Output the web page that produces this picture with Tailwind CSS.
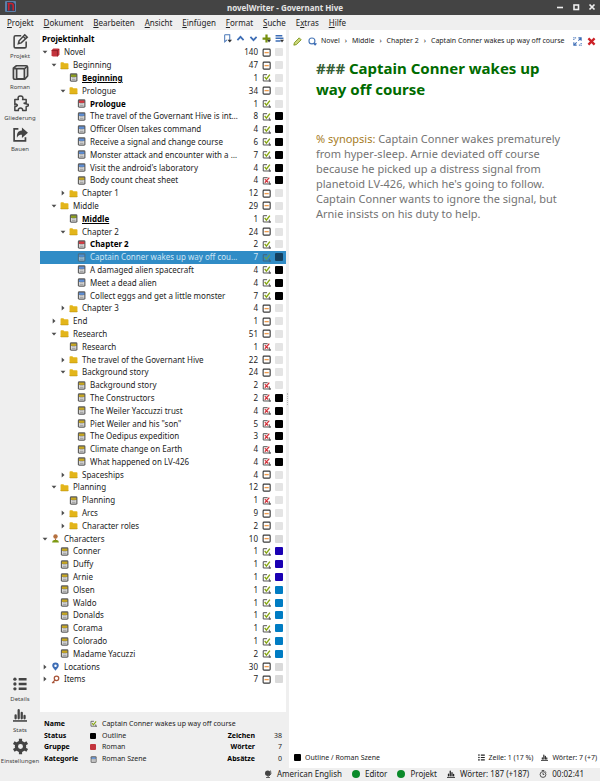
<!DOCTYPE html>
<html lang="de">
<head>
<meta charset="utf-8">
<title>novelWriter - Governant Hive</title>
<script src="https://cdn.jsdelivr.net/npm/@tailwindcss/browser@4"></script>
</head>
<body class="flex h-screen flex-col overflow-hidden bg-[#efefef] font-['Noto_Sans',sans-serif] text-[8px] leading-[12px] text-[#232323]">

<svg class="hidden" aria-hidden="true">
  <symbol id="doc" viewBox="0 0 16 16"><rect x="1.500" y="0.500" width="13.500" height="15" rx="2.500" fill="#5d5d5d"/><rect x="3.500" y="7" width="9.500" height="6.500" fill="#dedede"/><path d="M5 8.500h6.500M5 11.500h6.500" stroke="#8a8a8a" stroke-width="1.200"/><rect x="3.500" y="2.800" width="9.500" height="4" fill="currentColor"/></symbol>
  <symbol id="folder" viewBox="0 0 16 16"><path d="M1 3.500Q1 2 2.500 2H6l1.500 2H13.500Q15 4 15 5.500V12.500Q15 14 13.500 14H2.500Q1 14 1 12.500Z" fill="#e3b51a"/><path d="M1 12.500Q1 14 2.500 14h11q1.500 0 1.500-1.500" fill="none" stroke="#b8900c"/></symbol>
  <symbol id="cube" viewBox="0 0 16 16"><path d="M4 1h9.500L15 2.500V12l-3 3H3L1 13V4Z" fill="#c3343d"/><path d="M1.500 4.500H11.500V15M11.500 4.500 14.500 2" fill="none" stroke="#7e1b24" stroke-width="1.200"/></symbol>
  <symbol id="person" viewBox="0 0 16 16"><circle cx="8" cy="4.500" r="3.900" fill="#b5703f"/><path d="M2 15q0-4.500 3.500-4.500h5q3.500 0 3.500 4.500Z" fill="#7d9a13"/><path d="M7 8h2v3H7z" fill="#b5703f"/></symbol>
  <symbol id="pin" viewBox="0 0 16 16"><path d="M8 1a5.800 5.800 0 0 0-5.800 5.800C2.200 10 6 12.500 8 15.500c2-3 5.800-5.500 5.800-8.700A5.800 5.800 0 0 0 8 1Z" fill="#3d6db5"/><circle cx="8" cy="6.500" r="2.200" fill="#fff"/></symbol>
  <symbol id="key" viewBox="0 0 16 16"><path d="M7 9 2 14.500M4 12.500l2 2" stroke="#a8553a" stroke-width="2.200" fill="none"/><circle cx="9.800" cy="5.800" r="4" fill="none" stroke="#a8553a" stroke-width="2.200"/></symbol>
  <symbol id="yes" viewBox="0 0 16 16"><path d="M13 10v4.200H2.200V3H9" fill="none" stroke="#4a4a4a" stroke-width="1.700"/><path d="m4.800 7 3 4L14 3" fill="none" stroke="#86a512" stroke-width="2.500"/><path d="M15.500 12v3.500H12z" fill="#444"/></symbol>
  <symbol id="no" viewBox="0 0 16 16"><path d="M13 9.500v4.700H2.200V3H10" fill="none" stroke="#4a4a4a" stroke-width="1.700"/><path d="m5 5.500 6 6M13 3 5 12" fill="none" stroke="#d3323a" stroke-width="2.200"/><path d="M15.500 12v3.500H12z" fill="#444"/></symbol>
  <symbol id="part" viewBox="0 0 16 16"><rect x="2" y="2" width="12.500" height="12.500" rx="1.500" fill="#fff" stroke="#3a3a3a" stroke-width="2"/><path d="M4.500 8.200h7.500" stroke="#ee9a4c" stroke-width="2.400"/></symbol>
  <symbol id="down" viewBox="0 0 16 16"><path d="M1.500 4.500h13L8 12Z" fill="#4d4d4d"/></symbol>
  <symbol id="right" viewBox="0 0 16 16"><path d="M4.500 1.500v13L12 8Z" fill="#4d4d4d"/></symbol>
  <symbol id="bars" viewBox="0 0 16 16"><path d="M0 14.800h16" stroke="currentColor" stroke-width="1.800"/><path d="M3 11.700V8.500M6.500 11.700V2.500M10 11.700V5.500M13.200 11.700V9" stroke="currentColor" stroke-width="2.600" stroke-linecap="round"/></symbol>
  <symbol id="list" viewBox="0 0 16 16"><path d="M6.500 2.500h9M6.500 8h9M6.500 13.500h9" stroke="currentColor" stroke-width="2.800"/><g fill="currentColor"><circle cx="2.200" cy="2.500" r="1.900"/><circle cx="2.200" cy="8" r="1.900"/><circle cx="2.200" cy="13.500" r="1.900"/></g></symbol>
</svg>

<header class="relative flex h-[15px] shrink-0 items-center justify-center bg-[#444] pr-[30px] text-white">
  <svg class="absolute left-[5px] top-[1px] size-[11px]" viewBox="0 0 22 22"><rect width="22" height="22" rx="2" fill="#5b7fa8"/><path d="M4 2h12l4 4v14H4Z" fill="#2f4259"/><path d="M5 5h7q4.500 0 4.500 4.500V19M7.500 5v14" fill="none" stroke="#c9202c" stroke-width="3.200"/></svg>
  <h1 class="font-bold text-[#e6e6e6]">novelWriter - Governant Hive</h1>
  <div class="absolute right-[3px] top-[2px] flex gap-[6px]">
    <button aria-label="Minimieren" class="size-[10px]"><svg viewBox="0 0 10 10"><path d="M2 5.500h6" stroke="#eee" stroke-width="1.600"/></svg></button>
    <button aria-label="Maximieren" class="size-[10px]"><svg viewBox="0 0 10 10"><rect x="3" y="3" width="4.500" height="4.500" fill="none" stroke="#eee" stroke-width="1.600"/></svg></button>
    <button aria-label="Schließen" class="size-[10px]"><svg viewBox="0 0 10 10"><path d="m2.500 2.500 5 5m0-5-5 5" stroke="#eee" stroke-width="1.700"/></svg></button>
  </div>
</header>

<nav class="flex h-[15px] shrink-0 items-center gap-[10px] px-[7px]">
  <button><u>P</u>rojekt</button><button><u>D</u>okument</button><button><u>B</u>earbeiten</button><button><u>A</u>nsicht</button><button><u>E</u>infügen</button><button><u>F</u>ormat</button><button><u>S</u>uche</button><button>E<u>x</u>tras</button><button><u>H</u>ilfe</button>
</nav>

<div class="flex min-h-0 flex-1">
  <aside class="flex w-10 shrink-0 flex-col gap-[3px] pb-[2px] pt-[3px] text-[6px] leading-[10px] text-[#444]">
    <button class="flex h-7 flex-col items-center gap-[1px]"><svg class="size-[17px] shrink-0" viewBox="0 0 24 24" fill="none" stroke="currentColor" stroke-width="2.200"><path d="M13 4H5q-2 0-2 2v13q0 2 2 2h13q2 0 2-2v-7"/><path d="m9 15 1-4 8-8.500 3.500 3.500-8.500 8ZM16 5l3 3"/></svg>Projekt</button>
    <button class="flex h-7 flex-col items-center gap-[1px]"><svg class="size-[17px] shrink-0" viewBox="0 0 24 24" fill="none" stroke="currentColor" stroke-width="2.400"><path d="M6 2.500h14q2 0 2 2V17l-4 4.500H4q-2 0-2-2V6Z"/><rect x="6.500" y="6.500" width="11" height="14.500" rx="1.500"/><path d="m17.500 7 3.500-3.500M3 6.500h4"/></svg>Roman</button>
    <button class="flex h-7 flex-col items-center gap-[1px]"><svg class="size-[17px] shrink-0" viewBox="0 0 24 24" fill="none" stroke="currentColor" stroke-width="2.100" stroke-linejoin="round"><path d="M4 6.500h5q-1.500-5 3-5t3 5h5v5q-3-.5-3 0t5 1.500-2 3.500v5.500h-5q.5-3.500-3-3.500t-3 3.500H4v-5.500q5-1.500 3-3t-3 .5Z"/></svg>Gliederung</button>
    <button class="flex h-7 flex-col items-center gap-[1px]"><svg class="size-[17px] shrink-0" viewBox="0 0 24 24" fill="none" stroke="currentColor" stroke-width="2.400"><path d="M9 4H3v17h16v-5"/><path d="M14 2v4.500C8 7 6.500 11 7 16.500c2-3.500 4-4 7-4V17l8.500-7.500Z" fill="currentColor" stroke="none"/></svg>Bauen</button>
    <div class="flex-1"></div>
    <button class="flex h-7 flex-col items-center gap-[2px]"><svg class="my-[1px] size-[14px] shrink-0"><use href="#list"/></svg>Details</button>
    <button class="flex h-7 flex-col items-center gap-[2px]"><svg class="my-[1px] size-[14px] shrink-0"><use href="#bars"/></svg>Stats</button>
    <button class="flex h-7 flex-col items-center gap-[1px]"><svg class="size-[17px] shrink-0" viewBox="0 0 24 24" fill="none" stroke="currentColor"><circle cx="12" cy="12" r="5.800" stroke-width="4.600"/><path d="M12 1v5M12 18v5M2.500 6.500l4.300 2.500M17.200 15l4.300 2.500M2.500 17.500 6.800 15M17.200 9l4.300-2.500" stroke-width="4.500"/></svg>Einstellungen</button>
  </aside>

  <main class="flex min-w-0 flex-1">
    <section class="flex w-[41%] min-w-[246px] max-w-[246px] flex-col">
      <div class="flex h-4 shrink-0 items-center bg-white pl-[2px] pr-[2px] pt-px">
        <h2 class="flex-1 font-bold text-black">Projektinhalt</h2>
        <div class="flex gap-[4px]">
          <button aria-label="Lesezeichen"><svg class="size-[9px]" viewBox="0 0 16 16"><path d="M3 1.500h9v10M3 1.500V14l4-3.500" fill="none" stroke="#4a78b8" stroke-width="1.800"/><path d="M8 10h8l-4 5z" fill="#333"/></svg></button>
          <button aria-label="Nach oben"><svg class="size-[9px]" viewBox="0 0 16 16"><path d="m2.500 11 5.500-6 5.500 6" fill="none" stroke="#3d6db5" stroke-width="3"/></svg></button>
          <button aria-label="Nach unten"><svg class="size-[9px]" viewBox="0 0 16 16"><path d="m2.500 5 5.500 6 5.500-6" fill="none" stroke="#3d6db5" stroke-width="3"/></svg></button>
          <button aria-label="Hinzufügen"><svg class="size-[9px]" viewBox="0 0 16 16"><path d="M8 1v14M1 8h14" stroke="#76900d" stroke-width="4"/><path d="M9 10h7l-3.500 5z" fill="#333"/></svg></button>
          <button aria-label="Menü"><svg class="size-[9px]" viewBox="0 0 16 16"><path d="M1 3h12M1 7.500h14M1 12.500h9" stroke="#3d6db5" stroke-width="2.600"/><path d="M9 10h7l-3.500 5z" fill="#333"/></svg></button>
        </div>
      </div>
      <ul id="tree" role="tree" aria-label="Projektinhalt" class="flex min-h-0 flex-1 flex-col bg-white pb-[26px]"></ul>
      <div class="grid h-14 shrink-0 auto-rows-fr grid-cols-[46px_12px_1fr_auto_27px] items-center pb-[3px] pl-[4px] pr-[4px] pt-[6px] text-[7px]">
        <b class="text-black">Name</b><svg class="size-[7px]"><use href="#yes"/></svg><span class="col-span-3">Captain Conner wakes up way off course</span>
        <b class="text-black">Status</b><i class="size-[6px] rounded-[1px] bg-black"></i><span>Outline</span><b class="text-right text-black">Zeichen</b><span class="text-right">38</span>
        <b class="text-black">Gruppe</b><i class="size-[6px] rounded-[1px] bg-[#c3343d]"></i><span>Roman</span><b class="text-right text-black">Wörter</b><span class="text-right">7</span>
        <b class="text-black">Kategorie</b><svg class="size-[7px] text-[#6f9bd8]"><use href="#doc"/></svg><span>Roman Szene</span><b class="text-right text-black">Absätze</b><span class="text-right">0</span>
      </div>
    </section>

    <div role="separator" class="flex w-[3px] shrink-0 items-center justify-center"><i class="h-[12px] border-l border-dotted border-[#bbb]"></i></div>

    <section class="flex min-w-0 flex-1 flex-col bg-white">
      <div class="flex h-[22px] shrink-0 items-center px-[4px] text-[7px]">
        <button aria-label="Bearbeiten" class="mr-[6px]"><svg class="size-[9px]" viewBox="0 0 16 16"><path d="m1.500 14.500 1-4.500 8.500-8.500 3.500 3.500L6 13.500Z" fill="#cbd67c" stroke="#76900d" stroke-width="1.500"/></svg></button>
        <button aria-label="Suchen" class="mr-[4px]"><svg class="size-[9px]" viewBox="0 0 16 16"><circle cx="7" cy="7" r="5.300" fill="none" stroke="#4a78b8" stroke-width="2"/><path d="m11 11 3 3" stroke="#3d6db5" stroke-width="2.500"/><path d="M9 11h7l-3.500 4.500z" fill="#3d6db5"/></svg></button>
        <span class="flex min-w-0 flex-1 gap-[5px] whitespace-nowrap"><span>Novel</span><span>›</span><span>Middle</span><span>›</span><span>Chapter 2</span><span>›</span><span>Captain Conner wakes up way off course</span></span>
        <button aria-label="Vollbild" class="mr-[5px]"><svg class="size-[9px]" viewBox="0 0 16 16" fill="none" stroke="#3d6db5" stroke-width="1.900"><path d="M9.500 1.500h5v5M14 2 9.500 6.500M6.500 14.500h-5v-5M2 14l4.500-4.500"/><path d="M1.500 5.500v-4h4M14.500 10.500v4h-4" stroke-dasharray="2 1.200"/></svg></button>
        <button aria-label="Schließen"><svg class="size-[9px]" viewBox="0 0 16 16"><path d="m2.500 2.500 11 11m0-11-11 11" stroke="#cc2127" stroke-width="4"/></svg></button>
      </div>
      <article class="flex-1 px-[27px] pt-[6px]">
        <h3 class="max-w-[250px] text-[15px] font-bold leading-[21px] text-[#006b00]"><span class="text-[#366036]">###</span> Captain Conner wakes up<br>way off course</h3>
        <p class="mt-[31px] max-w-[250px] text-[11px] leading-[15px] text-[#737373]"><span class="text-[#a67c1e]">% synopsis:</span> Captain Conner wakes prematurely from hyper-sleep. Arnie deviated off course because he picked up a distress signal from planetoid LV-426, which he's going to follow. Captain Conner wants to ignore the signal, but Arnie insists on his duty to help.</p>
      </article>
      <div class="flex h-[21px] shrink-0 items-center gap-[4px] pl-[5px] pr-[3px] text-[7px]">
        <i class="size-[7px] rounded-[1px] bg-black"></i><span class="flex-1">Outline / Roman Szene</span>
        <svg class="size-[7px]"><use href="#list"/></svg><span class="mr-[4px]">Zeile: 1 (17 %)</span>
        <svg class="size-[7px]"><use href="#bars"/></svg><span>Wörter: 7 (+7)</span>
      </div>
    </section>
  </main>
</div>

<footer class="flex h-[13px] shrink-0 items-center justify-end gap-[10px] pb-[1px] pr-[16px]">
  <span class="flex items-center gap-[5px]"><svg class="size-[8px]" viewBox="0 0 16 16"><circle cx="7.500" cy="6.500" r="5.500" fill="#444"/><path d="M13 1q4 8-4 12M8 12v3M4 15h8" fill="none" stroke="#444" stroke-width="1.600"/></svg>American English</span>
  <span class="flex items-center gap-[5px]"><i class="size-[8px] rounded-full bg-[#0a8a2a]"></i>Editor</span>
  <span class="flex items-center gap-[5px]"><i class="size-[8px] rounded-full bg-[#0a8a2a]"></i>Projekt</span>
  <span class="flex items-center gap-[5px]"><svg class="size-[8px]"><use href="#bars"/></svg>Wörter: 187 (+187)</span>
  <span class="flex items-center gap-[5px]"><svg class="size-[8px]" viewBox="0 0 16 16" fill="none" stroke="#444" stroke-width="1.800"><circle cx="8" cy="9" r="5.800"/><path d="M8 5.500V9h2.500M5.500 1h5M13 3l1.500 1.500"/></svg>00:02:41</span>
</footer>

<script>
const INDENT = ['pl-0', 'pl-[9px]', 'pl-[18px]', 'pl-[26px]'];
const NOTE = 'text-[#c9a820]', SCENE = 'text-[#5e8fd6]', CHAP = 'text-[#d93a42]', PART = 'text-[#8da01c]';
const GREY = 'bg-[#e4e4e4]', BLACK = 'bg-black', NAVY = 'bg-[#1a00b3]', BLUE = 'bg-[#007cc3]';
// level, arrow, icon, icon colour, label, count, state, status colour, label style
const rows = [
  [0,'down','cube','','Novel',140,'part',GREY],
  [1,'down','folder','','Beginning',47,'part',GREY],
  [2,'','doc',PART,'Beginning',1,'yes',GREY,'font-bold text-black underline'],
  [2,'down','folder','','Prologue',34,'part',GREY],
  [3,'','doc',CHAP,'Prologue',1,'yes',GREY,'font-bold text-black'],
  [3,'','doc',SCENE,'The travel of the Governant Hive is int…',8,'yes',BLACK],
  [3,'','doc',SCENE,'Officer Olsen takes command',4,'yes',BLACK],
  [3,'','doc',SCENE,'Receive a signal and change course',6,'yes',BLACK],
  [3,'','doc',SCENE,'Monster attack and encounter with a …',7,'yes',BLACK],
  [3,'','doc',SCENE,"Visit the android's laboratory",4,'yes',BLACK],
  [3,'','doc',NOTE,'Body count cheat sheet',4,'no',BLACK],
  [2,'right','folder','','Chapter 1',12,'part',GREY],
  [1,'down','folder','','Middle',29,'part',GREY],
  [2,'','doc',PART,'Middle',1,'yes',GREY,'font-bold text-black underline'],
  [2,'down','folder','','Chapter 2',24,'part',GREY],
  [3,'','doc',CHAP,'Chapter 2',2,'yes',GREY,'font-bold text-black'],
  [3,'','doc',SCENE,'Captain Conner wakes up way off cou…',7,'yes','bg-[#14405f]','',true],
  [3,'','doc',SCENE,'A damaged alien spacecraft',4,'yes',BLACK],
  [3,'','doc',SCENE,'Meet a dead alien',4,'yes',BLACK],
  [3,'','doc',SCENE,'Collect eggs and get a little monster',7,'yes',BLACK],
  [2,'right','folder','','Chapter 3',4,'part',GREY],
  [1,'right','folder','','End',1,'part',GREY],
  [1,'down','folder','','Research',51,'part',GREY],
  [2,'','doc',NOTE,'Research',1,'no',GREY],
  [2,'right','folder','','The travel of the Governant Hive',22,'part',GREY],
  [2,'down','folder','','Background story',24,'part',GREY],
  [3,'','doc',NOTE,'Background story',2,'no',GREY],
  [3,'','doc',NOTE,'The Constructors',2,'no',BLACK],
  [3,'','doc',NOTE,'The Weiler Yaccuzzi trust',4,'no',BLACK],
  [3,'','doc',NOTE,'Piet Weiler and his "son"',5,'no',BLACK],
  [3,'','doc',NOTE,'The Oedipus expedition',3,'no',BLACK],
  [3,'','doc',NOTE,'Climate change on Earth',4,'no',BLACK],
  [3,'','doc',NOTE,'What happened on LV-426',4,'no',BLACK],
  [2,'right','folder','','Spaceships',4,'part',GREY],
  [1,'down','folder','','Planning',12,'part',GREY],
  [2,'','doc',NOTE,'Planning',1,'no',GREY],
  [2,'right','folder','','Arcs',9,'part',GREY],
  [2,'right','folder','','Character roles',2,'part',GREY],
  [0,'down','person','','Characters',10,'part','bg-[#dadada]'],
  [1,'','doc',NOTE,'Conner',1,'yes',NAVY],
  [1,'','doc',NOTE,'Duffy',1,'yes',NAVY],
  [1,'','doc',NOTE,'Arnie',1,'yes',NAVY],
  [1,'','doc',NOTE,'Olsen',1,'yes',BLUE],
  [1,'','doc',NOTE,'Waldo',1,'yes',BLUE],
  [1,'','doc',NOTE,'Donalds',1,'yes',BLUE],
  [1,'','doc',NOTE,'Corama',1,'yes',BLUE],
  [1,'','doc',NOTE,'Colorado',1,'yes',BLUE],
  [1,'','doc',NOTE,'Madame Yacuzzi',2,'yes',BLUE],
  [0,'right','pin','','Locations',30,'part','bg-[#dadada]'],
  [0,'right','key','','Items',7,'part','bg-[#dadada]'],
];
document.getElementById('tree').innerHTML = rows.map(([lv, arrow, icon, tint, label, n, state, status, style = '', sel]) => `
  <li role="treeitem" aria-level="${lv + 1}" ${sel ? 'aria-selected="true"' : ''} class="flex min-h-0 flex-1 items-center pr-[3px] ${INDENT[lv]} ${sel ? 'bg-[#308cc6] text-[#cfe6f5]' : ''}">
    <span class="flex w-[11px] shrink-0 justify-center pr-px"><svg class="size-[6px]">${arrow ? `<use href="#${arrow}"/>` : ''}</svg></span>
    <svg class="mr-[4px] size-[9px] shrink-0 ${tint} ${sel ? 'opacity-60' : ''}"><use href="#${icon}"/></svg>
    <span class="min-w-0 flex-1 whitespace-nowrap ${style}">${label}</span>
    <span class="mr-[4px] shrink-0">${n}</span>
    <svg class="mr-[4px] size-[9px] shrink-0 ${sel ? 'opacity-60' : ''}"><use href="#${state}"/></svg>
    <i class="size-[8px] shrink-0 rounded-[1px] ${status}"></i>
  </li>`).join('');
</script>
</body>
</html>
